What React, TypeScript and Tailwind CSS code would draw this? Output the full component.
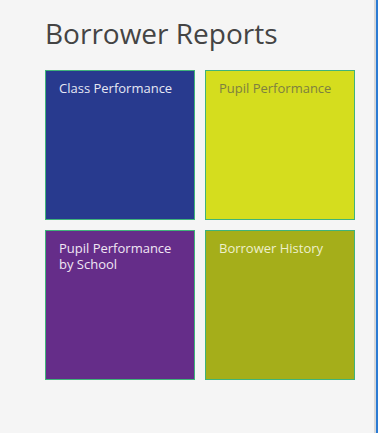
import React from 'react';

interface Tile {
  label: string;
  bg: string;
  text: string;
}

const tiles: Tile[] = [
  { label: 'Class Performance', bg: 'bg-[#283a8e]', text: 'text-[#e6e8f4]' },
  { label: 'Pupil Performance', bg: 'bg-[#d5dd1e]', text: 'text-[#7d8040]' },
  { label: 'Pupil Performance by School', bg: 'bg-[#652d89]', text: 'text-[#f1e6f4]' },
  { label: 'Borrower History', bg: 'bg-[#a5ae1a]', text: 'text-[#eef0cc]' },
];

export default function App() {
  return (
    <div className="flex h-[433px] w-[378px] bg-[#f5f5f5]" style={{ fontFamily: '"Open Sans", "Noto Sans", sans-serif' }}>
      <div className="flex-1 pl-[45px] pt-[13px]">
        <h1 className="text-[28px] leading-[40px] text-[#444444]">Borrower Reports</h1>
        <div className="mt-[17px] grid grid-cols-[150px_150px] gap-[10px]">
          {tiles.map((t) => (
            <div
              key={t.label}
              className={`h-[150px] border border-[#3fb37a] ${t.bg} px-[13px] pt-[9px]`}
            >
              <p className={`max-w-[118px] text-[13px] leading-[16px] ${t.text}`}>{t.label}</p>
            </div>
          ))}
        </div>
      </div>
      <div className="w-[2px] bg-[#d8d8d8]" />
      <div className="w-[2px] bg-[#2b7bd3]" />
    </div>
  );
}
